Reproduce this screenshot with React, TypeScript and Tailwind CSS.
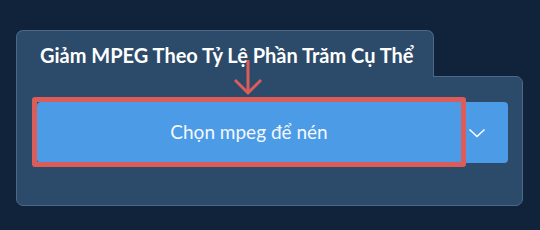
import React from "react";

export default function App() {
  return (
    <div className="w-[540px] h-[230px] bg-[#11233a] pt-[30px] pl-[16px] font-['Lato','Noto_Sans',sans-serif]">
      <div className="w-[507px] relative">
        <div className="relative z-10 w-[418px] h-[47px] -mb-px bg-[#2c4a6a] border-t border-l border-r border-[#4d6888] rounded-t-[7px] pl-[23px] pt-[12px]">
          <span className="text-[20px] font-bold text-white leading-[24px]">
            Giảm MPEG Theo Tỷ Lệ Phần Trăm Cụ Thể
          </span>
        </div>
        <div className="relative h-[130px] bg-[#2c4a6a] border border-[#4d6888] rounded-b-[7px] rounded-tr-[7px] pt-[25px] pl-[20px] pr-[14px]">
          <div className="flex h-[61px]">
            <div className="w-[424px] bg-[#4b9be6] rounded-l-[4px] flex items-center justify-center text-[19px] text-[#f4f8fc]">
              Chọn mpeg để nén
            </div>
            <div className="flex-1 bg-[#4b9be6] rounded-r-[4px] flex items-center pl-[7px]">
              <svg width="18" height="10" viewBox="0 0 18 10" fill="none">
                <path d="M1.5 1.5 L9 8.5 L16.5 1.5" stroke="#ffffff" strokeWidth="1.6" />
              </svg>
            </div>
          </div>
          <div className="absolute left-[15px] top-[20px] w-[434px] h-[70px] border-[5px] border-[#dc5c5a] rounded-[3px]" />
        </div>
        <svg className="absolute left-[208px] top-[28px] z-20" width="48" height="38" viewBox="0 0 48 38" fill="none">
          <path d="M24 2 L24 35" stroke="#dc5c5a" strokeWidth="3" />
          <path d="M11 22 L24 35 L37 22" stroke="#dc5c5a" strokeWidth="3" />
        </svg>
      </div>
    </div>
  );
}
